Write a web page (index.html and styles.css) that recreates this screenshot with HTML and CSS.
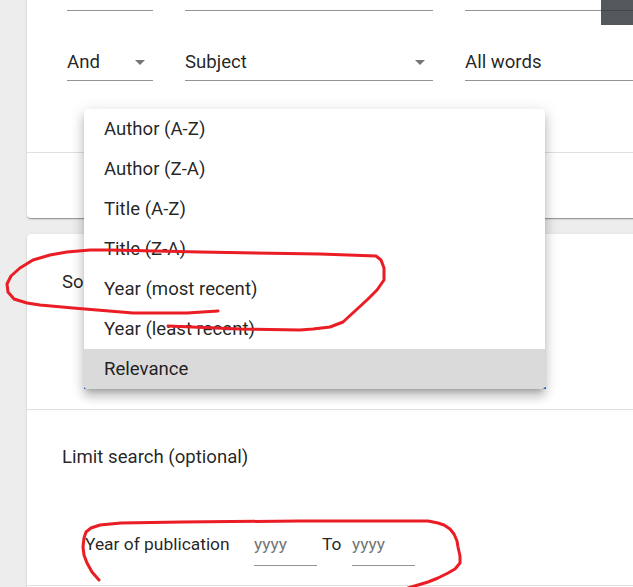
FILE: index.html
```html
<!DOCTYPE html>
<html lang="en">
<head>
<meta charset="utf-8">
<title>Search</title>
<link rel="stylesheet" href="styles.css">
</head>
<body>
<div class="page">
  <div class="card card-search">
    <div class="search-form">
      <div class="row">
        <div class="field f-op"></div>
        <div class="field f-type"></div>
        <div class="field f-mode"></div>
      </div>
      <div class="row row-2">
        <div class="field f-op"><span>And</span><i class="arrow"></i></div>
        <div class="field f-type"><span>Subject</span><i class="arrow"></i></div>
        <div class="field f-mode"><span>All words</span></div>
      </div>
    </div>
    <div class="card-actions"></div>
  </div>

  <div class="card card-options">
    <div class="sort">
      <div class="label">Sort by</div>
      <div class="select"></div>
    </div>
    <div class="limit">
      <div class="label">Limit search (optional)</div>
      <div class="year-row">
        <span class="year-label">Year of publication</span>
        <span class="input">yyyy</span>
        <span class="to">To</span>
        <span class="input">yyyy</span>
      </div>
    </div>
    <div class="more"></div>
  </div>

  <div class="menu">
    <div class="option">Author (A-Z)</div>
    <div class="option">Author (Z-A)</div>
    <div class="option">Title (A-Z)</div>
    <div class="option">Title (Z-A)</div>
    <div class="option">Year (most recent)</div>
    <div class="option">Year (least recent)</div>
    <div class="option active">Relevance</div>
  </div>

  <div class="thumb"></div>

  <svg class="annot" width="633" height="587" viewBox="0 0 633 587">
    <path d="M218,311 L187,313 L133,313 L73,308 L40,305 L27,303 L14,299 L8,292 L7,284 L11,276 L20,268 L33,260 L50,255 L67,252 L90,250 L110,250 L200,252 L320,254 L376,256 L381,260 L384,268 L384,280 L377,290 L368,299 L355,311 L343,322 L330,327 L313,329 L300,330 L240,329 L168,326"/>
    <path d="M99,580 L92,572 L87,563 L84,555 L83,547 L84,538 L86,532 L91,528 L100,525 L121,523 L182,522 L300,521 L428,521 L438,523 L444,525 L450,529 L454,534 L457,541 L458,547 L460,556 L460,563 L455,569 L448,573 L438,578 L428,582 L418,585 L408,588"/>
  </svg>
</div>
</body>
</html>
```

FILE: styles.css
```css
html, body {
  margin: 0;
  padding: 0;
}
body {
  background: #ededed;
  font-family: Roboto, "Liberation Sans", Arial, sans-serif;
  font-size: 18.6px;
  color: rgba(0, 0, 0, 0.87);
  overflow: hidden;
}
.page {
  position: relative;
  width: 633px;
  height: 587px;
  overflow: hidden;
  padding-left: 27px;
  box-sizing: border-box;
}
.card {
  background: #fff;
  width: 700px;
  border-radius: 4px;
  box-shadow: 0 2px 1px -1px rgba(0,0,0,.2), 0 1px 1px 0 rgba(0,0,0,.14), 0 1px 3px 0 rgba(0,0,0,.12);
}
.card-search {
  margin-top: -30px;
}
.search-form {
  padding: 0 0 71px 40px;
}
.row {
  display: flex;
  gap: 32px;
}
.field {
  flex: none;
  border-bottom: 1px solid #949494;
  display: flex;
  align-items: center;
  justify-content: space-between;
  padding: 10px 8px 6px 0;
  box-sizing: content-box;
  line-height: 24px;
  height: 24px;
}
.row-2 {
  margin-top: 29px;
}
.f-op { width: 78px; }
.f-type { width: 240px; }
.f-mode { width: 300px; }
.arrow {
  width: 0;
  height: 0;
  border-left: 5px solid transparent;
  border-right: 5px solid transparent;
  border-top: 5px solid #757575;
}
.card-actions {
  border-top: 1px solid #e0e0e0;
  height: 65px;
}
.card-options {
  margin-top: 16px;
  border-radius: 4px 4px 0 0;
}
.label {
  line-height: 24px;
  height: 24px;
}
.sort {
  padding: 36px 0 20px 35px;
}
.select {
  margin-left: 22px;
  width: 462px;
  height: 93px;
  border-bottom: 2px solid #3b6fd6;
}
.limit {
  border-top: 1px solid #e0e0e0;
  padding: 35px 0 19px 35px;
}
.year-row {
  display: flex;
  align-items: flex-start;
  margin-top: 63px;
  padding-left: 23px;
  line-height: 24px;
  font-size: 17.4px;
}
.year-label {
  width: 169px;
  flex: none;
}
.input {
  width: 63px;
  flex: none;
  color: #757575;
  padding-bottom: 9px;
  border-bottom: 1px solid #949494;
}
.to {
  width: 30px;
  padding-left: 5px;
  flex: none;
}
.more {
  border-top: 1px solid #e0e0e0;
  height: 40px;
}
.menu {
  position: absolute;
  left: 84px;
  top: 109px;
  width: 461px;
  background: #fff;
  border-radius: 4px;
  overflow: hidden;
  box-shadow: 0 5px 5px -3px rgba(0,0,0,.2), 0 8px 10px 1px rgba(0,0,0,.14), 0 3px 14px 2px rgba(0,0,0,.12);
}
.option {
  height: 40px;
  line-height: 40px;
  padding-left: 20px;
  color: rgba(0, 0, 0, 0.87);
}
.option.active {
  background: #dadada;
}
.thumb {
  position: absolute;
  left: 601px;
  top: 0;
  width: 40px;
  height: 25px;
  background: linear-gradient(to bottom, #54575c 10px, #42454a 10px, #42454a 11px, #54575c 11px);
}
.annot {
  position: absolute;
  left: 0;
  top: 0;
  pointer-events: none;
}
.annot path {
  fill: none;
  stroke: #ea1c24;
  stroke-width: 3;
  stroke-linecap: round;
  stroke-linejoin: round;
}
```
